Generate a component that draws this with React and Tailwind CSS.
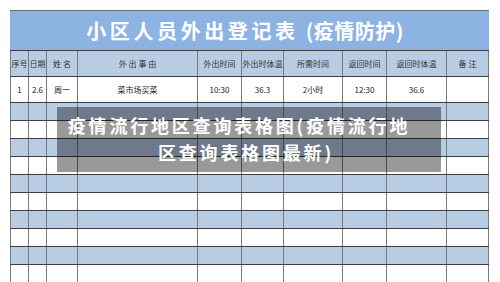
import React from "react";

const widths = ["w-[19px] border-l", "w-[18px]", "w-[31px]", "w-[120px]", "w-[44px]", "w-[42px]", "w-[59px]", "w-[44px]", "w-[60px]", "w-[42px]"];

const header = ["序号", "日期", "姓 名", "外 出 事 由", "外出时间", "外出时体温", "所需时间", "返回时间", "返回时体温", "备 注"];
const row1 = ["1", "2.6", "周一", "菜市场买菜", "10:30", "36.3", "2小时", "12:30", "36.6", ""];

function Row({ cells, h, bg, text }) {
  return (
    <div className={`flex border-b border-[#3f3f3f] ${h} ${bg}`}>
      {widths.map((w, i) => (
        <div
          key={i}
          className={`${w} shrink-0 border-r border-[#7a7a7a] flex items-center justify-center whitespace-pre ${text}`}
        >
          {cells ? cells[i] : ""}
        </div>
      ))}
    </div>
  );
}

export default function App() {
  const stripes = Array.from({ length: 11 }, (_, i) => i);
  return (
    <div
      className="relative w-[500px] h-[282px] overflow-hidden bg-white"
      style={{ fontFamily: '"Noto Sans CJK SC", "Noto Sans", sans-serif' }}
    >
      <div className="ml-[10px] mt-[10px] w-[479px] border-t border-[#6a6a6a]">
        <div className="h-[40px] border-b border-[#3f3f3f] bg-[#8db3e2] flex items-center justify-center pr-[9px] text-white font-bold text-[20px] leading-none">
          <span className="tracking-[3.6px]">小区人员外出登记表</span>
          <span className="ml-[7px] tracking-[0.5px]">(疫情防护)</span>
        </div>
        <Row cells={header} h="h-[26px]" bg="bg-[#b8cce4]" text="text-[8px] text-[#333]" />
        <Row cells={row1} h="h-[26px]" bg="bg-white" text="text-[8px] text-[#222]" />
        {stripes.map((i) => (
          <Row key={i} h="h-[18px]" bg={i % 2 === 0 ? "bg-[#b8cce4]" : "bg-white"} text="" />
        ))}
      </div>
      <div className="absolute left-[57px] top-[107px] w-[384px] h-[65px] bg-black/40 flex flex-col items-center justify-start pt-[5px] text-white font-bold text-[18px] leading-[27px] tracking-[2.8px]">
        <div className="pr-[20px]">疫情流行地区查询表格图(疫情流行地</div>
        <div className="pr-[6px]">区查询表格图最新)</div>
      </div>
    </div>
  );
}
